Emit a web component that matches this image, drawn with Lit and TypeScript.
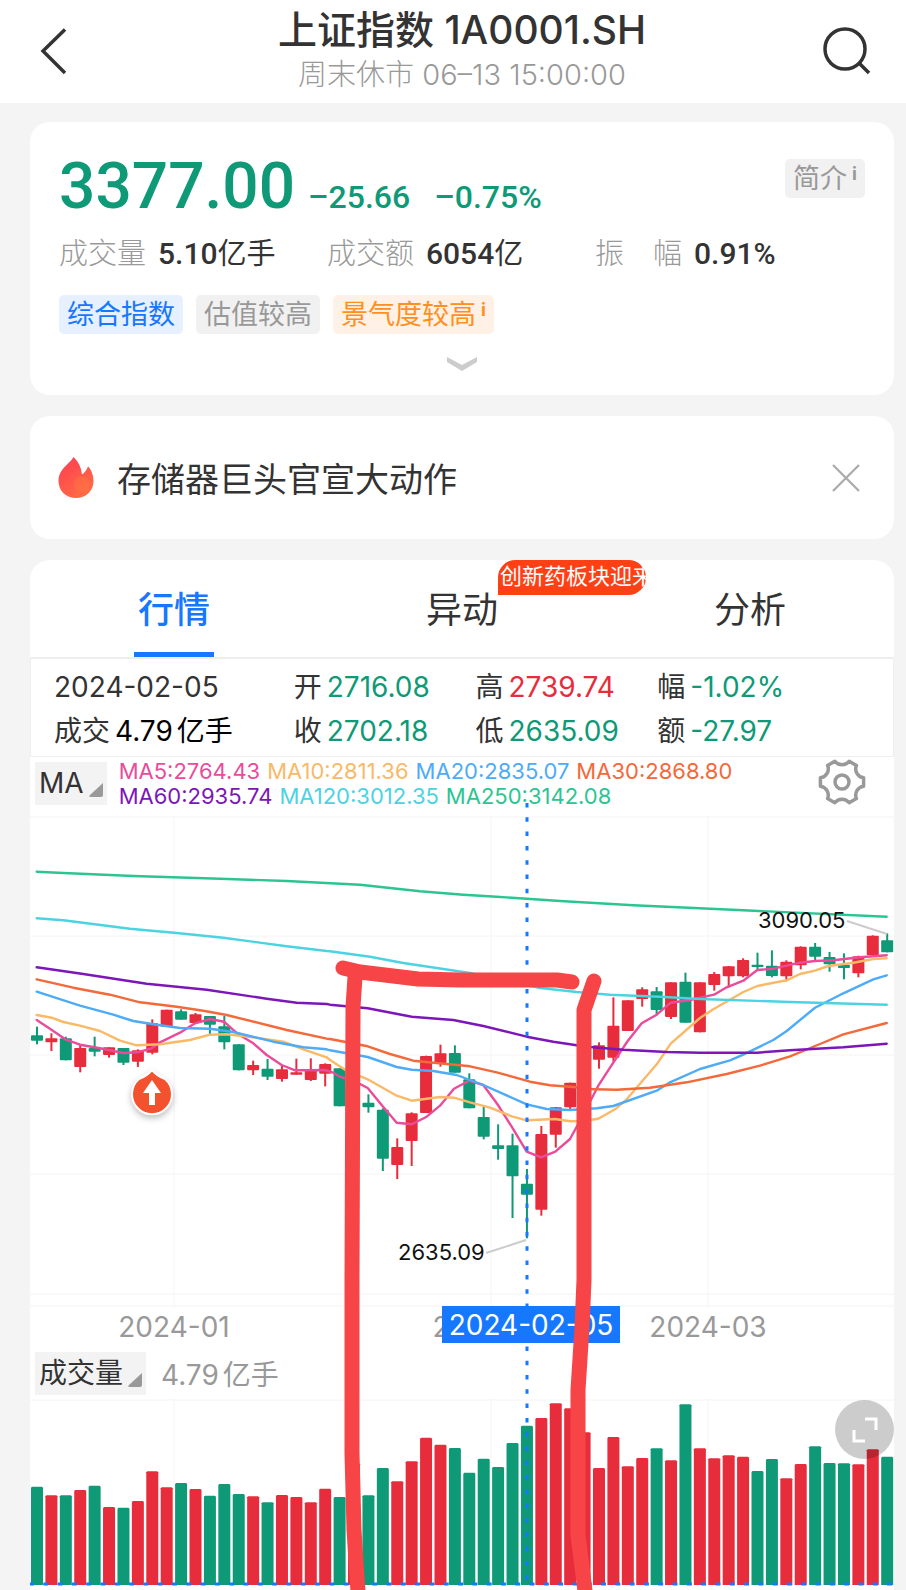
import { LitElement, html, svg, css } from "lit";
import { customElement } from "lit/decorators.js";

const UP = "#e72c3b";
const DOWN = "#0e9977";

/* Horizontal rhythm of the daily series, in chart units */
const FIRST = 7;
const PITCH = 14.41;
const BAR = 12;
const centre = (i: number) => FIRST + PITCH * i;

/* Curves and candles are digitised on a grid three times finer than the chart,
   in three strips, each with its own origin. */
type Strip = { x: number; y: number };
const LEFT: Strip = { x: -10, y: 34 };
const MID: Strip = { x: 300, y: 134 };
const RIGHT: Strip = { x: 530, y: 64 };

/* direction, high, body top, body bottom, low */
type Candle = [string, number, number, number, number];
const leftCandles: Candle[] = [
  ["d", 530, 556, 572, 583], ["u", 550, 565, 577, 603], ["d", 560, 565, 631, 631],
  ["u", 585, 594, 651, 667], ["d", 560, 594, 605, 619], ["u", 592, 592, 615, 623],
  ["d", 594, 594, 638, 645], ["u", 598, 601, 635, 651], ["u", 508, 520, 608, 613],
  ["u", 479, 479, 530, 530], ["d", 478, 484, 509, 509], ["u", 489, 493, 519, 519],
  ["d", 498, 498, 524, 552], ["d", 498, 529, 577, 598], ["d", 583, 583, 661, 661],
  ["u", 632, 645, 661, 675], ["d", 627, 656, 680, 690], ["u", 645, 658, 687, 695],
  ["u", 626, 667, 674, 674], ["u", 625, 657, 690, 693], ["u", 640, 642, 671, 709],
  ["d", 655, 655, 769, 769],
];
const midCandles: Candle[] = [
  ["u", 435, 438, 492, 492], ["d", 433, 458, 472, 488], ["d", 475, 479, 626, 663],
  ["u", 565, 591, 645, 687], ["u", 487, 490, 573, 648], ["u", 317, 318, 489, 489],
  ["u", 284, 310, 339, 350], ["d", 286, 309, 368, 368], ["d", 370, 388, 475, 475],
  ["d", 465, 501, 560, 568], ["d", 523, 586, 597, 629], ["d", 551, 586, 679, 804],
  ["d", 657, 701, 734, 865], ["u", 528, 552, 779, 797], ["u", 471, 472, 554, 593],
  ["u", 398, 398, 472, 478], ["u", 330, 335, 400, 400], ["u", 277, 286, 329, 356],
];
const rightCandles: Candle[] = [
  ["u", 352, 437, 533, 545], ["u", 361, 361, 453, 453], ["u", 322, 328, 357, 380],
  ["d", 321, 334, 390, 402], ["u", 307, 307, 411, 417], ["d", 278, 305, 428, 428],
  ["u", 307, 307, 457, 457], ["u", 276, 282, 315, 332], ["u", 258, 259, 289, 322],
  ["u", 235, 240, 289, 292], ["d", 218, 254, 261, 269], ["d", 211, 257, 288, 292],
  ["u", 241, 245, 289, 304], ["u", 199, 200, 256, 268], ["d", 189, 200, 230, 246],
  ["d", 216, 231, 253, 275], ["d", 220, 254, 264, 298], ["u", 227, 229, 280, 292],
  ["u", 166, 167, 226, 226], ["d", 160, 181, 217, 217],
];
const lift = (rows: Candle[], s: Strip): Candle[] =>
  rows.map(([d, ...v]) => [d, ...v.map((n) => s.y + n / 3)] as Candle);
const candles = [...lift(leftCandles, LEFT), ...lift(midCandles, MID), ...lift(rightCandles, RIGHT)];

/* Top edge of each volume bar */
const volumes = [
  590, 616, 616, 600, 587, 651, 653, 633, 544, 592, 579, 597, 617, 582, 612, 619, 637, 615, 621, 637,
  596, 621, 520, 616, 534, 574, 514, 443, 464, 474, 548, 506, 531, 459, 407, 384, 340, 355, 427, 534,
  441, 529, 504, 475, 511, 343, 475, 505, 496, 500, 543, 507, 565, 522, 469, 519, 520, 523, 478, 500,
].map((v) => (v - 327) / 3);

const trace = (l: string, m: string, r: string) =>
  [[l, LEFT], [m, MID], [r, RIGHT]]
    .flatMap(([pts, s]) =>
      (pts as string).split(" ").filter(Boolean).map((p) => {
        const [x, y] = p.split(",").map(Number);
        const o = s as Strip;
        return `${(o.x + x / 3).toFixed(1)},${(o.y + y / 3).toFixed(1)}`;
      }))
    .join(" ");

const averages = [
  { name: "MA5", value: "2764.43", color: "#ea4b9b", points: trace(
    "50,510 92,538 136,568 180,584 240,595 310,609 352,607 395,595 420,577 480,548 525,520 570,507 612,515 655,553 700,580 740,615 785,645 825,661 870,661 915,660 940,668",
    "30,380 60,390 90,402 113,414 157,467 200,518 245,523 290,500 330,467 372,416 417,392 460,405 502,462 545,530 590,605 633,622 676,605 720,567 740,530 762,490",
    "115,617 160,548 203,483 245,430 290,404 332,368 390,360 462,344 500,322 550,302 592,270 640,266 720,248 765,243 820,241 900,232 980,226") },
  { name: "MA10", value: "2811.36", color: "#f9b967", points: trace(
    "50,495 95,503 130,516 180,527 240,543 300,572 350,586 420,583 510,570 570,554 620,553 700,562 790,575 850,598 920,622",
    "0,330 50,362 113,388 200,437 245,452 330,441 372,443 420,457 480,473 545,499 590,511 675,507 720,514 760,513",
    "115,716 165,688 200,658 290,553 332,491 420,414 460,388 550,336 592,318 680,301 720,282 765,272 805,258 880,248 940,237 980,235") },
  { name: "MA20", value: "2835.07", color: "#4dabf7", points: trace(
    "50,425 180,467 280,494 340,513 400,523 480,534 570,536 640,546 760,575 850,592 920,598",
    "0,301 113,321 200,351 245,359 310,363 380,375 460,405 590,463 650,477 720,480",
    "110,685 160,678 290,632 330,607 420,567 510,541 550,524 640,480 680,453 765,383 850,340 940,298 980,286") },
  { name: "MA30", value: "2868.80", color: "#f4693a", points: trace(
    "50,388 160,413 270,434 360,457 470,470 550,482 620,495 800,540 920,566",
    "0,267 113,289 180,312 250,332 420,349 500,367 600,395 660,406 740,412",
    "70,627 170,629 270,623 380,607 500,582 600,557 690,529 780,492 850,463 980,429") },
  { name: "MA60", value: "2935.74", color: "#7d16b8", points: trace(
    "50,352 190,372 380,401 560,419 740,446 830,458 920,462",
    "0,164 113,175 245,200 370,210 460,228 590,260 670,275 740,286",
    "90,501 190,509 320,516 420,518 590,518 690,511 850,502 980,491") },
  { name: "MA120", value: "3012.35", color: "#4cd3e2", points: trace(
    "50,205 130,211 330,236 470,249 610,263 800,289 920,303",
    "0,4 120,20 220,39 420,69 625,113 740,126",
    "150,344 300,350 420,357 690,366 980,374") },
  { name: "MA250", value: "3142.08", color: "#2cc592", points: trace(
    "50,65 130,69 340,78 600,86 800,93",
    "90,-196 270,-176 400,-166 500,-160 590,-154",
    "0,63 220,76 550,91 980,110") },
];

const bodyColor = (d: string) => (d === "u" ? UP : DOWN);

const gear = () => {
  const at = (deg: number, r: number) => {
    const t = (deg * Math.PI) / 180;
    return `${(24 + r * Math.cos(t)).toFixed(2)} ${(24 + r * Math.sin(t)).toFixed(2)}`;
  };
  let d = "";
  for (let k = 0; k < 6; k++) {
    const a = 60 * k + 30;
    d += `${k ? "L" : "M"}${at(a - 19, 22)}A9 9 0 0 0 ${at(a + 19, 22)}`;
  }
  return d + "Z";
};

@customElement("price-chart")
class PriceChart extends LitElement {
  static styles = css`
    :host { display: block; }
    svg { display: block; width: 100%; height: auto; }
    .grid { stroke: #f4f4f4; stroke-width: 1; }
    .month { font: 28px Inter, "Noto Sans CJK SC", sans-serif; fill: #999; text-anchor: middle; }
    .mark { font: 22px Inter, sans-serif; fill: #111; }
    .leader { stroke: #ccc; stroke-width: 2; }
    .average { fill: none; stroke-width: 2.4; stroke-linejoin: round; stroke-linecap: round; }
    .signal { filter: drop-shadow(0 3px 3px rgb(0 0 0 / 25%)); }
  `;
  render() {
    return html`<svg viewBox="0 0 864 534" role="img" aria-label="日K线">
      <g class="grid">
        ${[1, 120, 239, 358, 478, 490].map((y) => svg`<line x1="0" x2="864" y1=${y} y2=${y}></line>`)}
        ${[144, 461, 678].map((x) => svg`<line x1=${x} x2=${x} y1="0" y2="490"></line>`)}
      </g>
      ${candles.map(([d, high, top, bottom, low], i) => svg`<g fill=${bodyColor(d)}>
        <rect x=${centre(i) - 1} y=${high} width="2" height=${low - high}></rect>
        <rect x=${centre(i) - BAR / 2} y=${top} width=${BAR} height=${bottom - top} rx="1"></rect>
      </g>`)}
      ${averages.map((a) => svg`<polyline class="average" stroke=${a.color} points=${a.points}></polyline>`)}
      <line class="leader" x1="817" y1="105" x2="857" y2="118"></line>
      <text class="mark" x="728" y="112">3090.05</text>
      <line class="leader" x1="456" y1="437" x2="496" y2="424"></line>
      <text class="mark" x="368" y="444">2635.09</text>
      <g class="signal">
        <path d="M122 254Q127 260 135 263A20 20 0 1 1 109 263Q117 260 122 254Z" fill="#f4522f" stroke="#fff" stroke-width="2"></path>
        <path d="M122 264L131 277H125V289H119V277H113Z" fill="#fff"></path>
      </g>
      <text class="month" x="144" y="521">2024-01</text>
      <text class="month" x="461" y="521">2024-02</text>
      <text class="month" x="678" y="521">2024-03</text>
    </svg>`;
  }
}

@customElement("volume-chart")
class VolumeChart extends LitElement {
  static styles = css`
    :host { display: block; }
    svg { display: block; width: 100%; height: auto; }
    .grid { stroke: #f4f4f4; stroke-width: 1; }
    .base { stroke: #1677ff; stroke-width: 3; stroke-dasharray: 5 9.3; stroke-dashoffset: 1; }
  `;
  render() {
    return html`<svg viewBox="0 0 864 191" role="img" aria-label="成交量">
      <g class="grid">
        <line x1="0" x2="864" y1="1" y2="1"></line>
        ${[144, 461, 678].map((x) => svg`<line x1=${x} x2=${x} y1="0" y2="186"></line>`)}
      </g>
      ${volumes.map((top, i) => svg`<path fill=${bodyColor(candles[i][0])}
        d="M${centre(i) - 6} 186V${top + 1}l1 -1h10l1 1V186Z"></path>`)}
      <line class="base" x1="0" x2="864" y1="185" y2="185"></line>
    </svg>`;
  }
}

@customElement("app-root")
class AppRoot extends LitElement {
  static styles = css`
    :host {
      display: block;
      min-height: 100vh;
      background: #f4f4f4;
      color: #333;
      font-family: Inter, "Noto Sans CJK SC", sans-serif;
      overflow: hidden;
    }
    * { box-sizing: border-box; }
    h1, p, dl, dd, dt { margin: 0; font-weight: 400; }
    button { border: 0; padding: 0; margin: 0; background: none; font: inherit; color: inherit; cursor: pointer; }
    svg { display: block; }

    .top { display: grid; grid-template-columns: 1fr auto 1fr; align-items: center; height: 103px; padding: 0 12px 0 30px; background: #fff; }
    .back { justify-self: start; padding-left: 4px; }
    .find { justify-self: end; padding-right: 22px; }
    .heading { text-align: center; }
    .heading h1 { font-size: 39px; line-height: 46px; font-weight: 500; }
    .heading p { font-size: 29px; line-height: 44px; font-weight: 300; color: #999; }

    .page { display: grid; gap: 21px; padding: 19px 12px 0 30px; }
    .card { background: #fff; border-radius: 20px; }

    .quote { padding: 29px 29px 24px; }
    .quote-head { display: flex; justify-content: space-between; align-items: flex-start; padding-top: 8px; }
    .price { display: flex; align-items: baseline; font-family: Roboto, sans-serif; font-weight: 500; color: #0e9977; font-size: 32px; line-height: 56px; }
    .price strong { font-size: 64px; font-weight: 500; margin-right: 13px; }
    .price span { margin-right: 24px; }
    .facts { display: grid; grid-template-columns: 268fr 268fr 270fr; padding-top: 7px; font-size: 29px; line-height: 44px; }
    .facts div { display: flex; gap: 12px; }
    .facts dt { color: #999; font-weight: 300; }
    .facts dd { font-family: Roboto, "Noto Sans CJK SC", sans-serif; white-space: nowrap; }
    .facts b { font-size: 30px; font-weight: 500; }
    .tags { display: flex; gap: 13px; padding-top: 19px; }
    .tag { display: flex; height: 39px; padding: 0 8px; border-radius: 5px; font-size: 27px; line-height: 40px; background: #f1f1f1; color: #999; }
    .tag.blue { background: #e6f0ff; color: #1677ff; }
    .tag.orange { background: #fff1e5; color: #ff8f1f; }
    .tag i { font-style: normal; font-size: 18px; line-height: 30px; font-weight: 700; padding-left: 5px; }
    .more { display: block; margin: 23px auto 0; }

    .news { display: flex; align-items: center; height: 123px; padding: 0 34px 0 28px; font-size: 34px; }
    .news a { flex: 1; padding-left: 22px; color: inherit; text-decoration: none; }

    .card-body { background: #fff; }
    .tabs { display: grid; grid-template-columns: repeat(3, 1fr); height: 97px; border-radius: 20px 20px 0 0; }
    .tab { display: flex; flex-direction: column; align-items: center; justify-content: space-between; font-size: 36px; line-height: 52px; padding-top: 24px; }
    .tab::after { content: ""; width: 80px; height: 5px; }
    .tab.on { color: #1677ff; font-weight: 500; }
    .tab.on::after { background: #1677ff; }
    .name { position: relative; }
    .badge { position: absolute; left: 100%; top: -24px; width: 148px; height: 35px; padding-left: 2px; border-radius: 18px 18px 18px 0; background: #ff4015; color: #fff; font-size: 22px; line-height: 32px; font-weight: 400; white-space: nowrap; overflow: hidden; text-align: left; }

    .day { display: grid; grid-template-columns: 240fr 182fr 182fr 236fr; align-content: start; height: 100px; padding: 6px 0 0 23px; border: 1px solid #eee; border-top-width: 2px; font-size: 28px; line-height: 44px; }
    .day div { display: flex; gap: 5px; height: 44px; white-space: nowrap; }
    .up { color: #e72c3b; }
    .down { color: #0e9977; }
    .ink { color: #000; }
    .unit { margin-left: 4px; }

    .plot { position: relative; }
    .legend { display: flex; align-items: flex-start; height: 59px; padding: 0 28px 0 5px; }
    .picker { display: flex; align-items: flex-end; gap: 5px; height: 43px; padding: 0 3px 0 4px; background: #f3f3f3; font-size: 28px; line-height: 44px; }
    .picker svg { margin-bottom: 8px; }
    .legend .picker { margin-top: 5px; }
    .values { flex: 1; display: flex; flex-wrap: wrap; column-gap: 7px; padding: 2px 40px 0 12px; font-size: 22px; line-height: 25px; }
    .volume { display: flex; align-items: center; gap: 15px; height: 49px; padding: 0 5px 3px; font-size: 28px; color: #999; }
    .volume .picker { color: #333; }
    .overlay { position: absolute; inset: 0; width: 100%; height: auto; pointer-events: none; }
    .cross { stroke: #1677ff; stroke-width: 3; stroke-dasharray: 4.5 9.8; }
    .pen { fill: none; stroke: #f74446; stroke-width: 15; stroke-linecap: round; stroke-linejoin: round; }
    .date { font: 28px Inter, sans-serif; fill: #fff; text-anchor: middle; }
    .expand { position: absolute; right: 0; bottom: 131px; width: 59px; height: 59px; border-radius: 50%; background: rgb(0 0 0 / 20%); display: grid; place-items: center; }
  `;

  corner() {
    return html`<svg width="15" height="14" viewBox="0 0 15 14"><path d="M14 0V12Q14 14 12 14H2Q-1 14 1 12Z" fill="#999"></path></svg>`;
  }

  cell(label: string, value: unknown, tone: string) {
    return html`<div><dt>${label}</dt><dd class=${tone}>${value}</dd></div>`;
  }

  render() {
    const turnover = html`4.79<span class="unit">亿手</span>`;
    return html`
      <header class="top">
        <button class="back" aria-label="返回">
          <svg width="40" height="50" viewBox="0 0 40 50" fill="none" stroke="#333" stroke-width="3.500"><path d="M31 2.500L9 24L31 46"></path></svg>
        </button>
        <div class="heading">
          <h1>上证指数 1A0001.SH</h1>
          <p>周末休市 06–13 15:00:00</p>
        </div>
        <button class="find" aria-label="搜索">
          <svg width="50" height="50" viewBox="0 0 50 50" fill="none" stroke="#333" stroke-width="3.500"><circle cx="23" cy="22" r="20"></circle><path d="M37 36L47 46"></path></svg>
        </button>
      </header>
      <main class="page">
        <section class="card quote">
          <div class="quote-head">
            <div class="price"><strong>3377.00</strong><span>–25.66</span><span>–0.75%</span></div>
            <button class="tag">简介<i>i</i></button>
          </div>
          <dl class="facts">
            <div><dt>成交量</dt><dd><b>5.10</b>亿手</dd></div>
            <div><dt>成交额</dt><dd><b>6054</b>亿</dd></div>
            <div><dt>振　幅</dt><dd><b>0.91%</b></dd></div>
          </dl>
          <div class="tags">
            <span class="tag blue">综合指数</span>
            <span class="tag">估值较高</span>
            <span class="tag orange">景气度较高<i>i</i></span>
          </div>
          <button class="more" aria-label="展开">
            <svg width="30" height="14" viewBox="0 0 30 14"><path d="M0 0L15 8L30 0V5L15 14L0 5Z" fill="#ccc"></path></svg>
          </button>
        </section>
        <section class="card news">
          <svg width="37" height="42" viewBox="0 0 37 42">
            <defs><linearGradient id="fire" x1="0" y1="0" x2="0.600" y2="1"><stop offset="0.200" stop-color="#ff4550"></stop><stop offset="1" stop-color="#ff6a45"></stop></linearGradient></defs>
            <path d="M15.500 0C12 7 1 11 0.500 23.500C0.500 34 8 41 18 41S35.500 34 35.500 24C35.500 18 33 12 30 9.500Q28 15 24 17.500Q23 7 15.500 0Z" fill="url(#fire)"></path>
            <path d="M16 26Q17 19 24 19Q31 20 32 27Q31 36 22 36Q15 33 16 26Z" fill="#ff7840" opacity="0.450"></path>
          </svg>
          <a href="#news">存储器巨头官宣大动作</a>
          <button aria-label="关闭"><svg width="28" height="28" viewBox="0 0 28 28" stroke="#aaa" stroke-width="2.200"><path d="M1 1L27 27M27 1L1 27"></path></svg></button>
        </section>
        <section>
          <nav class="card tabs">
            <button class="tab on"><span class="name">行情</span></button>
            <button class="tab"><span class="name">异动<span class="badge">创新药板块迎来</span></span></button>
            <button class="tab"><span class="name">分析</span></button>
          </nav>
          <div class="card-body">
            <dl class="day">
              <div><dt>2024-02-05</dt></div>
              ${this.cell("开", "2716.08", "down")} ${this.cell("高", "2739.74", "up")} ${this.cell("幅", "-1.02%", "down")}
              ${this.cell("成交", turnover, "ink")} ${this.cell("收", "2702.18", "down")} ${this.cell("低", "2635.09", "down")}
              ${this.cell("额", "-27.97", "down")}
            </dl>
            <div class="plot">
              <div class="legend">
                <button class="picker">MA${this.corner()}</button>
                <div class="values">${averages.map((a) => html`<span style="color:${a.color}">${a.name}:${a.value}</span>`)}</div>
                <button aria-label="设置">
                  <svg width="48" height="50" viewBox="0 -1 48 50" fill="none" stroke="#999" stroke-width="3.500" stroke-linejoin="round"><path d=${gear()}></path><circle cx="24" cy="24" r="7"></circle></svg>
                </button>
              </div>
              <price-chart></price-chart>
              <div class="volume">
                <button class="picker">成交量${this.corner()}</button>
                <span>${turnover}</span>
              </div>
              <volume-chart></volume-chart>
              <button class="expand" aria-label="全屏">
                <svg width="26" height="26" viewBox="0 0 26 26" fill="none" stroke="#fff" stroke-width="3"><path d="M13 2H24V13M2 13V24H13"></path></svg>
              </button>
              <svg class="overlay" viewBox="0 0 864 833">
                <line class="cross" x1="497" x2="497" y1="46" y2="828"></line>
                <rect x="412" y="549" width="178" height="37" fill="#1677ff"></rect>
                <text class="date" x="501" y="578">2024-02-05</text>
                <g class="pen">
                  <path d="M313 211L330 215L388 222L430 223H527L542 225"></path>
                  <path d="M325 220L323 250L322 523V696L324 773L329 850"></path>
                  <path d="M564 224L554 253V523L552 570L548 633V778L557 850"></path>
                </g>
              </svg>
            </div>
          </div>
        </section>
      </main>
    `;
  }
}

declare global {
  interface HTMLElementTagNameMap {
    "app-root": AppRoot;
    "price-chart": PriceChart;
    "volume-chart": VolumeChart;
  }
}
